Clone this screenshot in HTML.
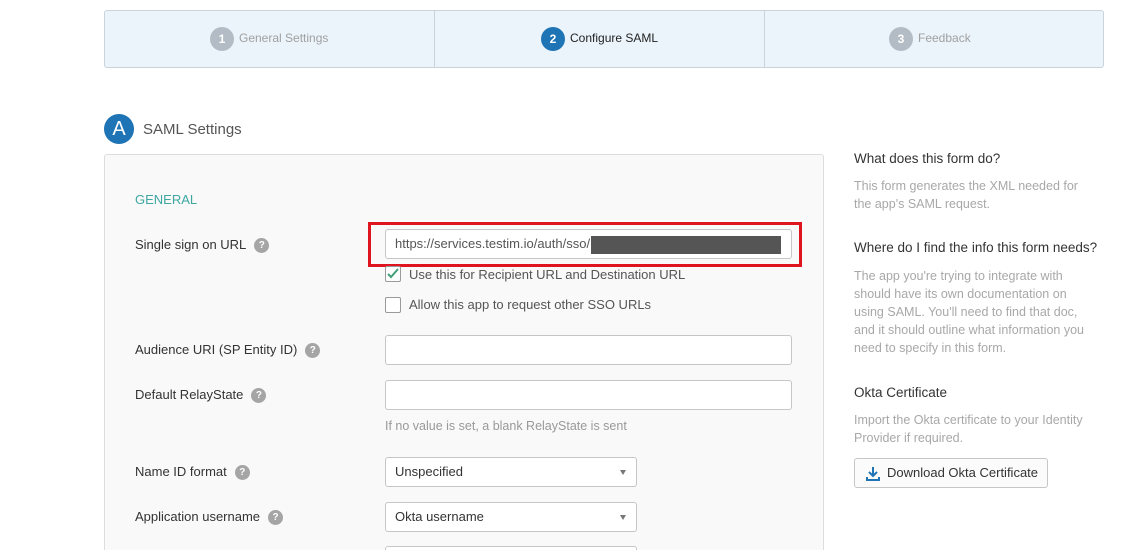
<!DOCTYPE html>
<html><head><style>
*{margin:0;padding:0;box-sizing:border-box}
html,body{width:1128px;height:550px;overflow:hidden}
body{background:#fff;font-family:"Liberation Sans",sans-serif;color:#333;position:relative}
.a{position:absolute}
.steps{left:104px;top:10px;width:1000px;height:58px;background:#ebf4fb;border:1px solid #c9d3dc;border-radius:3px}
.div{top:0;width:1px;height:56px;background:#c9d3dc}
.num{width:24px;height:24px;border-radius:12px;color:#fff;font-size:12px;font-weight:bold;text-align:center;line-height:24px}
.st{font-size:12px;top:20px}
.panel{left:104px;top:154px;width:720px;height:420px;background:#f9f9f9;border:1px solid #ddd;border-radius:3px}
.lbl{font-size:13px;color:#333}
.q{display:inline-block;width:15px;height:15px;border-radius:8px;background:#a5a5a5;color:#fff;font-size:10px;text-align:center;line-height:15px;font-weight:bold;vertical-align:middle;margin-left:8px}
.inp{height:30px;background:#fff;border:1px solid #c6c6c6;border-radius:3px;font-size:13px;padding-left:9px;line-height:28px;color:#333}
.cb{width:16px;height:16px;border:1px solid #9a9a9a;border-radius:2px;background:#fff}
.h4{position:absolute;left:854px;font-size:13.5px;color:#333;white-space:nowrap;line-height:18px}
.p{position:absolute;left:854px;width:240px;font-size:12.5px;color:#a8a8a8;line-height:18px}
.arrow{position:absolute;right:10px;top:12px;width:0;height:0;border-left:3px solid transparent;border-right:3px solid transparent;border-top:5px solid #777}
</style></head><body>
<div class="a steps">
 <div class="a div" style="left:329px"></div>
 <div class="a div" style="left:659px"></div>
 <div class="a num" style="left:105px;top:16px;background:#b3bcc4">1</div>
 <div class="a st" style="left:134px;color:#a0a0a0">General Settings</div>
 <div class="a num" style="left:436px;top:16px;background:#1f74b5">2</div>
 <div class="a st" style="left:465px;color:#222">Configure SAML</div>
 <div class="a num" style="left:784px;top:16px;background:#b3bcc4">3</div>
 <div class="a st" style="left:813px;color:#a0a0a0">Feedback</div>
</div>
<div class="a" style="left:104px;top:114px;width:30px;height:30px;border-radius:15px;background:#1f74b5;color:#fff;font-size:20px;text-align:center;line-height:30px">A</div>
<div class="a" style="left:143px;top:121px;font-size:15px;color:#555">SAML Settings</div>
<div class="a panel"></div>
<div class="a" style="left:135px;top:192px;font-size:13px;color:#3fa7a1">GENERAL</div>
<div class="a lbl" style="left:135px;top:237px">Single sign on URL<span class="q">?</span></div>
<div class="a" style="left:368px;top:222px;width:434px;height:45px;border:3px solid #e0141e"></div>
<div class="a inp" style="left:385px;top:229px;width:407px;white-space:nowrap;overflow:hidden;color:#555">https://services.testim.io/auth/sso/1</div>
<div class="a" style="left:591px;top:236px;width:190px;height:18px;background:#555"></div>
<div class="a cb" style="left:385px;top:266px"><svg width="14" height="14" viewBox="0 0 14 14"><path d="M2 7l3 3 7-8" stroke="#3fa07a" stroke-width="2" fill="none"/></svg></div>
<div class="a lbl" style="left:409px;top:267px;color:#555">Use this for Recipient URL and Destination URL</div>
<div class="a cb" style="left:385px;top:297px"></div>
<div class="a lbl" style="left:409px;top:297px;color:#555">Allow this app to request other SSO URLs</div>
<div class="a lbl" style="left:135px;top:342px">Audience URI (SP Entity ID)<span class="q">?</span></div>
<div class="a inp" style="left:385px;top:335px;width:407px"></div>
<div class="a lbl" style="left:135px;top:387px">Default RelayState<span class="q">?</span></div>
<div class="a inp" style="left:385px;top:380px;width:407px"></div>
<div class="a" style="left:385px;top:419px;font-size:12.5px;color:#999">If no value is set, a blank RelayState is sent</div>
<div class="a lbl" style="left:135px;top:464px">Name ID format<span class="q">?</span></div>
<div class="a inp" style="left:385px;top:457px;width:252px">Unspecified<span class="arrow"></span></div>
<div class="a lbl" style="left:135px;top:509px">Application username<span class="q">?</span></div>
<div class="a inp" style="left:385px;top:502px;width:252px">Okta username<span class="arrow"></span></div>
<div class="a inp" style="left:385px;top:546px;width:252px"></div>
<div class="h4" style="top:150px">What does this form do?</div>
<div class="p" style="top:177px">This form generates the XML needed for the app's SAML request.</div>
<div class="h4" style="top:239px">Where do I find the info this form needs?</div>
<div class="p" style="top:267px">The app you're trying to integrate with should have its own documentation on using SAML. You'll need to find that doc, and it should outline what information you need to specify in this form.</div>
<div class="h4" style="top:384px">Okta Certificate</div>
<div class="p" style="top:411px">Import the Okta certificate to your Identity Provider if required.</div>
<div class="a" style="left:854px;top:458px;width:194px;height:30px;border:1px solid #c6c6c6;border-radius:3px;background:#fbfbfb;font-size:13px;line-height:28px;padding-left:32px;color:#333">Download Okta Certificate
 <svg class="a" style="left:11px;top:7px" width="14" height="15" viewBox="0 0 14 15"><path d="M7 1v9M3 6l4 4 4-4" stroke="#1f74b5" stroke-width="2" fill="none"/><path d="M1 11v3h12v-3" stroke="#1f74b5" stroke-width="2" fill="none"/></svg>
</div>
</body></html>
